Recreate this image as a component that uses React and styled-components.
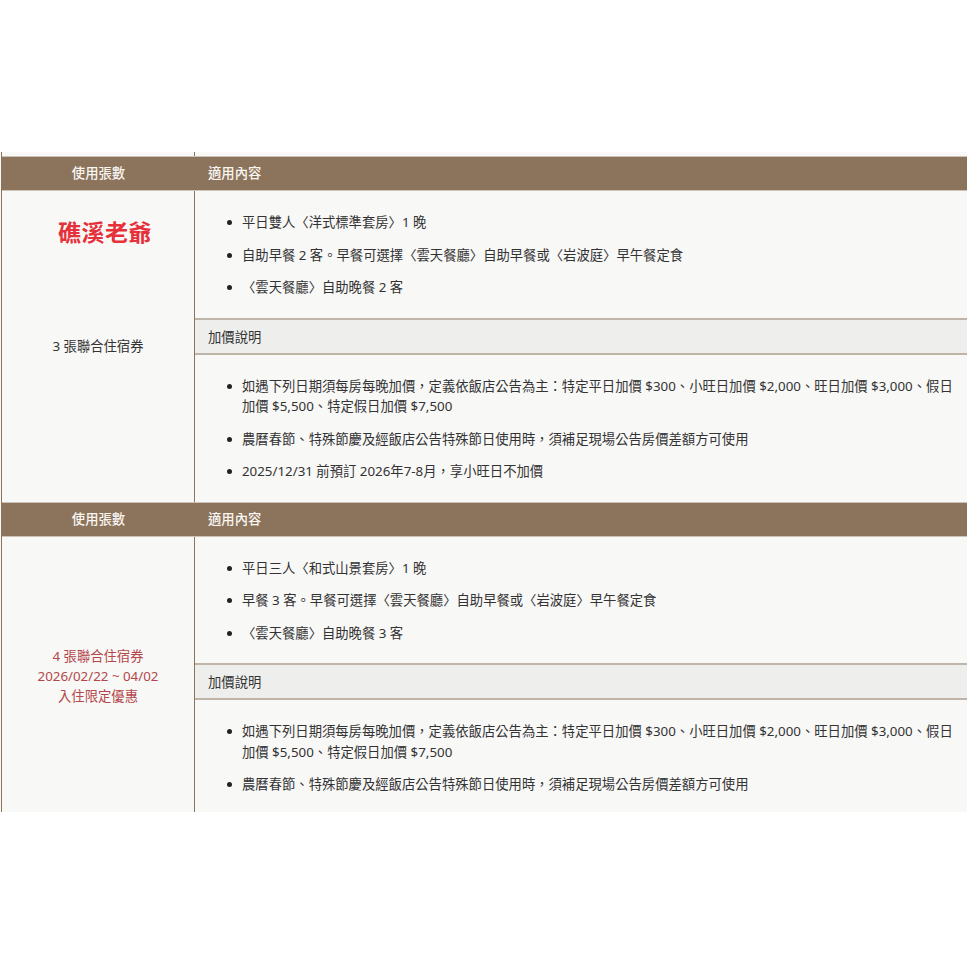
import React from 'react';
import styled, { createGlobalStyle } from 'styled-components';

const Global = createGlobalStyle`
  html, body { margin: 0; padding: 0; background: #ffffff; overflow: hidden; }
  body { font-family: "Noto Sans", "Noto Sans CJK TC", sans-serif; }
  * { box-sizing: border-box; }
`;

const BROWN = '#8b735c';

const Page = styled.div`
  width: 967px;
  height: 967px;
  background: #ffffff;
  padding-top: 152px;
`;

const Clip = styled.div`
  height: 660px;
  overflow: hidden;
  background: #f8f8f7;
  padding-left: 1px;
`;

const Table = styled.div`
  width: 966px;
  border-left: 1px solid ${BROWN};
  font-size: 13.33px;
  color: #333333;
`;

const Row = styled.div`
  display: grid;
  grid-template-columns: 193px 1fr;
`;

const Strip = styled(Row)`
  height: 4px;
`;

const StripLeft = styled.div`
  border-right: 1px solid ${BROWN};
`;

const HeaderRow = styled(Row)`
  height: 35px;
  background: ${BROWN};
  border-top: 1px solid #cdc3b8;
  border-bottom: 1px solid #cdc3b8;
  color: #faf6f1;
  font-weight: 500;
  align-items: center;
`;

const HeaderCell = styled.div`
  text-align: ${(p) => (p.$center ? 'center' : 'left')};
  padding-left: ${(p) => (p.$center ? '0' : '13px')};
  line-height: 20px;
  padding-bottom: 1px;
`;

const LeftCell = styled.div`
  border-right: 1px solid ${BROWN};
  display: grid;
  grid-template-rows: 1fr auto 1fr;
  text-align: center;
  color: ${(p) => p.$color};
  line-height: 20px;
`;

const Title = styled.div`
  align-self: start;
  padding-top: 25px;
  padding-left: 14px;
  font-family: "Noto Sans CJK TC", sans-serif;
  font-size: 23px;
  font-weight: 700;
  line-height: 30px;
  color: #e6303a;
  letter-spacing: 0.5px;
`;

const LeftText = styled.div`
  grid-row: 2;
`;

const RightCell = styled.div`
  display: flex;
  flex-direction: column;
`;

const List = styled.ul`
  list-style: none;
  margin: 0;
  padding: 21px 8px 20px 31px;
`;

const Item = styled.li`
  display: flex;
  align-items: flex-start;
  line-height: 20.5px;
  & + & { margin-top: 12px; }
  &::before {
    content: '';
    flex: none;
    width: 5px;
    height: 5px;
    border-radius: 50%;
    background: #222;
    margin-top: 8px;
    margin-left: 1px;
    margin-right: 10px;
  }
`;

const ItemText = styled.span`
  flex: 1;
`;

const SubHeader = styled.div`
  background: #eeeeed;
  border-top: 2px solid #bfb4a8;
  border-bottom: 2px solid #bfb4a8;
  height: 37px;
  display: flex;
  align-items: center;
  padding-left: 13px;
  color: #333;
`;

const extras3 = [
  '如遇下列日期須每房每晚加價，定義依飯店公告為主：特定平日加價 $300、小旺日加價 $2,000、旺日加價 $3,000、假日加價 $5,500、特定假日加價 $7,500',
  '農曆春節、特殊節慶及經飯店公告特殊節日使用時，須補足現場公告房價差額方可使用',
  '2025/12/31 前預訂 2026年7-8月，享小旺日不加價',
];

const sections = [
  {
    title: '礁溪老爺',
    lines: ['3 張聯合住宿券'],
    color: '#333333',
    items: [
      '平日雙人〈洋式標準套房〉1 晚',
      '自助早餐 2 客。早餐可選擇〈雲天餐廳〉自助早餐或〈岩波庭〉早午餐定食',
      '〈雲天餐廳〉自助晚餐 2 客',
    ],
    extras: extras3,
  },
  {
    title: null,
    lines: ['4 張聯合住宿券', '2026/02/22 ~ 04/02', '入住限定優惠'],
    color: '#b4474b',
    items: [
      '平日三人〈和式山景套房〉1 晚',
      '早餐 3 客。早餐可選擇〈雲天餐廳〉自助早餐或〈岩波庭〉早午餐定食',
      '〈雲天餐廳〉自助晚餐 3 客',
    ],
    extras: extras3.slice(0, 2),
  },
];

function Section({ s }) {
  return (
    <>
      <HeaderRow>
        <HeaderCell $center>使用張數</HeaderCell>
        <HeaderCell>適用內容</HeaderCell>
      </HeaderRow>
      <Row>
        <LeftCell $color={s.color}>
          {s.title && <Title>{s.title}</Title>}
          <LeftText>
            {s.lines.map((l) => (
              <div key={l}>{l}</div>
            ))}
          </LeftText>
        </LeftCell>
        <RightCell>
          <List>
            {s.items.map((t) => (
              <Item key={t}>
                <ItemText>{t}</ItemText>
              </Item>
            ))}
          </List>
          <SubHeader>加價說明</SubHeader>
          <List>
            {s.extras.map((t) => (
              <Item key={t}>
                <ItemText>{t}</ItemText>
              </Item>
            ))}
          </List>
        </RightCell>
      </Row>
    </>
  );
}

export default function App() {
  return (
    <Page>
      <Global />
      <Clip>
        <Table>
          <Strip>
            <StripLeft />
            <div />
          </Strip>
          {sections.map((s, i) => (
            <Section key={i} s={s} />
          ))}
        </Table>
      </Clip>
    </Page>
  );
}
